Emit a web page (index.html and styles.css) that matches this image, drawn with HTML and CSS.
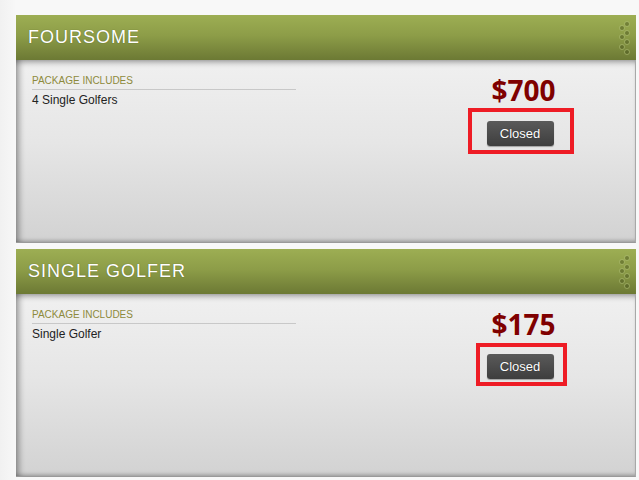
FILE: index.html
```html
<!DOCTYPE html>
<html>
<head>
<meta charset="utf-8">
<link rel="stylesheet" href="styles.css">
</head>
<body>
<div class="page">
  <section class="card">
    <header class="card-head">
      <h2 class="card-title">FOURSOME</h2>
      <svg class="grip" width="14" height="36" viewBox="0 0 14 36">
        <g fill="rgba(60,70,20,0.4)" stroke="rgba(200,215,140,0.6)" stroke-width="0.8">
          <circle cx="9" cy="4" r="2.5"/><circle cx="4" cy="8" r="2.5"/>
          <circle cx="9" cy="13" r="2.5"/><circle cx="4" cy="17" r="2.5"/>
          <circle cx="9" cy="22" r="2.5"/><circle cx="4" cy="27" r="2.5"/>
          <circle cx="9" cy="32" r="2.5"/>
        </g>
      </svg>
    </header>
    <div class="card-body">
      <div class="includes">
        <div class="includes-label">PACKAGE INCLUDES</div>
        <div class="includes-text">4 Single Golfers</div>
      </div>
      <div class="buy">
        <div class="price">$700</div>
        <div class="mark mark-wide"><span class="btn">Closed</span></div>
      </div>
    </div>
  </section>
  <section class="card">
    <header class="card-head">
      <h2 class="card-title">SINGLE GOLFER</h2>
      <svg class="grip" width="14" height="36" viewBox="0 0 14 36">
        <g fill="rgba(60,70,20,0.4)" stroke="rgba(200,215,140,0.6)" stroke-width="0.8">
          <circle cx="9" cy="4" r="2.5"/><circle cx="4" cy="8" r="2.5"/>
          <circle cx="9" cy="13" r="2.5"/><circle cx="4" cy="17" r="2.5"/>
          <circle cx="9" cy="22" r="2.5"/><circle cx="4" cy="27" r="2.5"/>
          <circle cx="9" cy="32" r="2.5"/>
        </g>
      </svg>
    </header>
    <div class="card-body">
      <div class="includes">
        <div class="includes-label">PACKAGE INCLUDES</div>
        <div class="includes-text">Single Golfer</div>
      </div>
      <div class="buy">
        <div class="price">$175</div>
        <div class="mark mark-narrow"><span class="btn">Closed</span></div>
      </div>
    </div>
  </section>
</div>
</body>
</html>
```

FILE: styles.css
```css
html, body {
  margin: 0;
  padding: 0;
  background: #f8f8f8;
  font-family: "Liberation Sans", Arial, sans-serif;
}
.page {
  padding: 15px 3px 0 16px;
  display: flex;
  flex-direction: column;
  gap: 6px;
  background: linear-gradient(to right, #f1f1f1 0, #f6f6f6 12px, #f8f8f8 16px);
  height: 465px;
}
.card {
  display: flex;
  flex-direction: column;
}
.card-head {
  height: 45px;
  background: linear-gradient(to bottom, #9dae53 0%, #8d9d48 45%, #6c7934 100%);
  display: flex;
  align-items: center;
  justify-content: space-between;
  padding: 0 4px 0 12px;
}
.card-title {
  margin: 0;
  color: #fff;
  font-weight: normal;
  font-size: 18px;
  letter-spacing: 1px;
  text-shadow: 0 0 1px rgba(40,50,10,0.6);
}
.grip {
  display: block;
}
.card-body {
  height: 183px;
  box-sizing: border-box;
  background: linear-gradient(to bottom, #f0f0f0 0%, #e6e6e6 45%, #d2d2d2 100%);
  border-right: 1px solid #a8a8a8;
  border-bottom: 1px solid #9a9a9a;
  box-shadow: inset 6px 0 6px -3px rgba(0,0,0,0.35), inset 0 8px 6px -6px rgba(0,0,0,0.35), inset 0 -3px 4px -2px rgba(0,0,0,0.25);
  display: flex;
  padding: 15px 13px 0 16px;
}
.includes {
  width: 264px;
}
.includes-label {
  font-size: 10px;
  color: #8d8a3c;
  padding-bottom: 2px;
  border-bottom: 1px solid #c8c8c8;
  line-height: 12px;
}
.includes-text {
  font-size: 12px;
  color: #222;
  margin-top: 3px;
  line-height: 14px;
}
.buy {
  margin-left: auto;
  width: 200px;
  display: flex;
  flex-direction: column;
  align-items: center;
}
.price {
  font-family: "Open Sans", "DejaVu Sans", sans-serif;
  font-weight: bold;
  font-size: 28px;
  color: #7f0000;
  line-height: 32px;
  margin-top: -1px;
  padding-left: 3px;
}
.mark {
  border: 4px solid #ee1c25;
  display: flex;
}
.mark-wide {
  padding: 9px 16px 4px 15px;
  margin-top: 2px;
  margin-left: -3px;
}
.mark-narrow {
  padding: 7px 9px 3px 7px;
  margin-top: 3px;
  margin-left: -2px;
}
.btn {
  display: block;
  width: 67px;
  height: 25px;
  line-height: 25px;
  text-align: center;
  font-size: 13px;
  color: #fff;
  border-radius: 3px;
  background: linear-gradient(to bottom, #5a5a5a 0%, #3e3e3e 100%);
  box-shadow: 0 1px 1px rgba(0,0,0,0.3);
  text-shadow: 0 0 1px rgba(0,0,0,0.6);
}
```
